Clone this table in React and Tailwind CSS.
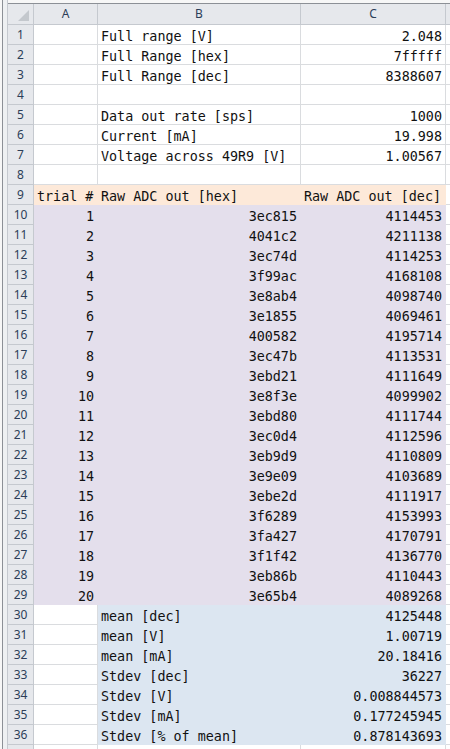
const FILL = {
  none: "bg-white border-[#dadcdf]",
  peach: "bg-[#fde9d9] border-[#fde9d9]",
  lav: "bg-[#e4dfec] border-[#e4dfec]",
  blue: "bg-[#dce6f1] border-[#dce6f1]",
};

const trials = [
  ["3ec815", "4114453"],
  ["4041c2", "4211138"],
  ["3ec74d", "4114253"],
  ["3f99ac", "4168108"],
  ["3e8ab4", "4098740"],
  ["3e1855", "4069461"],
  ["400582", "4195714"],
  ["3ec47b", "4113531"],
  ["3ebd21", "4111649"],
  ["3e8f3e", "4099902"],
  ["3ebd80", "4111744"],
  ["3ec0d4", "4112596"],
  ["3eb9d9", "4110809"],
  ["3e9e09", "4103689"],
  ["3ebe2d", "4111917"],
  ["3f6289", "4153993"],
  ["3fa427", "4170791"],
  ["3f1f42", "4136770"],
  ["3eb86b", "4110443"],
  ["3e65b4", "4089268"],
];

const stats = [
  ["mean [dec]", "4125448"],
  ["mean [V]", "1.00719"],
  ["mean [mA]", "20.18416"],
  ["Stdev [dec]", "36227"],
  ["Stdev [V]", "0.008844573"],
  ["Stdev [mA]", "0.177245945"],
  ["Stdev [% of mean]", "0.878143693"],
];

// each row: [A, B, C] cells as { v, right, fill }
function buildRows() {
  const rows = [
    [{}, { v: "Full range [V]" }, { v: "2.048", right: true }],
    [{}, { v: "Full Range [hex]" }, { v: "7fffff", right: true }],
    [{}, { v: "Full Range [dec]" }, { v: "8388607", right: true }],
    [{}, {}, {}],
    [{}, { v: "Data out rate [sps]" }, { v: "1000", right: true }],
    [{}, { v: "Current [mA]" }, { v: "19.998", right: true }],
    [{}, { v: "Voltage across 49R9 [V]" }, { v: "1.00567", right: true }],
    [{}, {}, {}],
    [
      { v: "trial #", fill: "peach" },
      { v: "Raw ADC out [hex]", fill: "peach" },
      { v: "Raw ADC out [dec]", fill: "peach" },
    ],
  ];
  trials.forEach(([hex, dec], i) => {
    rows.push([
      { v: String(i + 1), right: true, fill: "lav" },
      { v: hex, right: true, fill: "lav" },
      { v: dec, right: true, fill: "lav" },
    ]);
  });
  stats.forEach(([label, val]) => {
    rows.push([{}, { v: label, fill: "blue" }, { v: val, right: true, fill: "blue" }]);
  });
  rows.push([{}, {}, {}]);
  return rows;
}

function Cell({ cell, width }) {
  const fill = FILL[cell.fill || "none"];
  return (
    <div
      className={`${width} h-[20px] shrink-0 border-r border-b flex items-end px-[3px] whitespace-nowrap ${fill} ${
        cell.right ? "justify-end" : "justify-start"
      }`}
    >
      <span className="leading-[15px] text-[13.4px] text-[#111]">{cell.v}</span>
    </div>
  );
}

function RowHead({ n }) {
  return (
    <div className="w-[26px] h-[20px] shrink-0 bg-[#e6e8ec] border-r border-b border-[#c5c9cf] flex items-center justify-center text-[12px] text-[#2c3e58] font-['Noto_Sans',sans-serif] leading-none">
      {n}
    </div>
  );
}

export default function App() {
  const rows = buildRows();
  const widths = ["w-[64px]", "w-[203px]", "w-[145px]"];

  return (
    <div className="w-[450px] h-[749px] overflow-hidden bg-white flex font-['DejaVu_Sans_Mono',monospace]">
      <div className="w-[8px] shrink-0 h-full bg-[#eef0f2] border-r border-[#c5c9cf] flex">
        <div className="w-[2px] bg-[#f7f7f7]" />
        <div className="w-px bg-[#8c9096]" />
      </div>
      <div className="flex-1 min-w-0 flex flex-col">
        <div className="h-[4px] shrink-0 bg-[#f7f7f7] border-b border-[#8c9096]" />
        <div className="flex h-[21px] shrink-0 font-['Noto_Sans',sans-serif] text-[12px] text-[#2c3e58]">
          <div className="w-[26px] shrink-0 bg-[#e6e8ec] border-r border-b border-[#c5c9cf] relative">
            <svg className="absolute right-[4px] bottom-[3px]" width="11" height="11" viewBox="0 0 11 11">
              <polygon points="11,0 11,11 0,11" fill="#c4c8cd" />
            </svg>
          </div>
          {["A", "B", "C"].map((l, i) => (
            <div
              key={l}
              className={`${widths[i]} shrink-0 bg-[#e6e8ec] border-r border-b border-[#c5c9cf] flex items-center justify-center`}
            >
              {l}
            </div>
          ))}
          <div className="flex-1 bg-[#e6e8ec] border-b border-[#c5c9cf]" />
        </div>
        {rows.map((r, idx) => (
          <div key={idx} className="flex shrink-0">
            <RowHead n={idx < 36 ? idx + 1 : ""} />
            {r.map((c, j) => (
              <Cell key={j} cell={c} width={widths[j]} />
            ))}
            <div className="flex-1 h-[20px] bg-white border-b border-[#dadcdf]" />
          </div>
        ))}
      </div>
    </div>
  );
}
